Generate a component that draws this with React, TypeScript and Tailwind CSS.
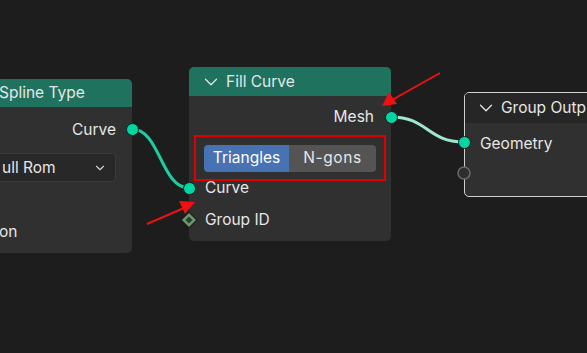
import { ChevronDown } from 'lucide-react'

const font = { fontFamily: 'Inter, "Noto Sans", sans-serif' }

function Socket({ x, y, color = '#00d6a3' }: { x: number; y: number; color?: string }) {
  return (
    <div
      className="absolute w-[13px] h-[13px] rounded-full border border-[#1a1a1a]"
      style={{ left: x - 6.5, top: y - 6.5, background: color }}
    />
  )
}

export default function App() {
  return (
    <div className="relative w-[587px] h-[353px] overflow-hidden bg-[#1d1d1d] text-[#e6e6e6] text-[15.5px]" style={font}>
      {/* Spline Type node */}
      <div className="absolute left-[-80px] top-[79px] w-[212px] h-[174px] rounded-[5px] bg-[#303030] overflow-hidden flex flex-col">
        <div className="h-[28px] bg-[#1e725e] flex items-center pl-[79px] leading-none">Spline Type</div>
        <div className="flex flex-col px-[16px]">
          <div className="h-[46px] flex items-center justify-end">Curve</div>
          <div className="h-[29px] ml-[-10px] rounded-[4px] bg-[#282828] border border-[#3a3a3a] flex items-center justify-between pl-[75px] pr-[8px]">
            <span>ull Rom</span>
            <ChevronDown size={14} strokeWidth={2} className="text-[#d0d0d0]" />
          </div>
          <div className="h-[34px]" />
          <div className="h-[32px] flex items-center pl-[63px]">on</div>
        </div>
      </div>

      {/* Fill Curve node */}
      <div className="absolute left-[189px] top-[67px] w-[202px] h-[174px] rounded-[5px] bg-[#303030] overflow-hidden flex flex-col">
        <div className="h-[29px] bg-[#1e725e] flex items-center gap-[4px] pl-[11px] leading-none">
          <ChevronDown size={22} strokeWidth={1.4} />
          <span>Fill Curve</span>
        </div>
        <div className="h-[39px] flex items-center justify-end pr-[17px] pt-[3px]">Mesh</div>
        <div className="mx-[5px] h-[46px] border-2 border-[#e00000] flex items-center px-[8px]">
          <div className="flex w-full h-[27px] rounded-[4px] overflow-hidden">
            <div className="w-[85px] bg-[#4772b3] flex items-center justify-center text-white">Triangles</div>
            <div className="flex-1 bg-[#545454] flex items-center justify-center tracking-[0.6px]">N-gons</div>
          </div>
        </div>
        <div className="h-[24px] mt-[-5px] flex items-center pl-[16px]">Curve</div>
        <div className="h-[40px] flex items-center pl-[16px]">Group ID</div>
      </div>

      {/* Group Output node */}
      <div className="absolute left-[464px] top-[92px] w-[160px] h-[105px] rounded-[5px] bg-[#303030] border border-[#cfcfcf] overflow-hidden flex flex-col">
        <div className="h-[30px] bg-[#262626] flex items-center gap-[4px] pl-[10px] leading-none">
          <ChevronDown size={22} strokeWidth={1.4} />
          <span className="whitespace-nowrap">Group Outp</span>
        </div>
        <div className="h-[40px] flex items-center pl-[15px] pt-[1px]">Geometry</div>
      </div>

      {/* links + arrows */}
      <svg className="absolute inset-0" width={587} height={353}>
        <path d="M132 129 C 160 129, 161 188, 189 188" stroke="#1fcc9f" strokeWidth={3} fill="none" />
        <path d="M391 117 C 428 117, 427 142, 464 142" stroke="#9ee8d0" strokeWidth={3} fill="none" />
        <line x1={440} y1={73} x2={392} y2={100} stroke="#ee1111" strokeWidth={2} />
        <polygon points="382,106 389,92 397,104" fill="#ee1111" />
        <line x1={147} y1={224} x2={184} y2={208} stroke="#ee1111" strokeWidth={2} />
        <polygon points="195,202 179,201 185,214" fill="#ee1111" />
        <rect x={183.5} y={214.5} width={11} height={11} transform="rotate(45 189 220)" fill="#6a9a6e" stroke="#1a1a1a" strokeWidth={1} />
        <rect x={186.5} y={217.5} width={5} height={5} transform="rotate(45 189 220)" fill="#2c3d2e" />
        <circle cx={464} cy={173} r={6} fill="#2e2e2e" stroke="#6a6a6a" strokeWidth={1.5} />
      </svg>

      <Socket x={132} y={129} />
      <Socket x={391} y={117} />
      <Socket x={189} y={188} />
      <Socket x={464} y={142} />
    </div>
  )
}
